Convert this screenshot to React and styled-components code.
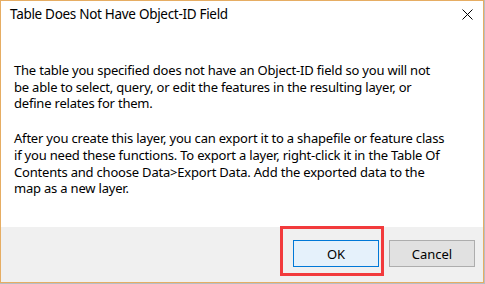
import React from 'react';
import styled, { createGlobalStyle } from 'styled-components';

const Global = createGlobalStyle`
  html, body {
    margin: 0;
    padding: 0;
    background: #b8bec4;
  }
  body {
    width: 485px;
    height: 284px;
    overflow: hidden;
    font-family: "Noto Sans", "Open Sans", sans-serif;
  }
`;

const Window = styled.div`
  box-sizing: border-box;
  width: 484px;
  height: 283px;
  border: 1px solid #e6ad63;
  background: #fff;
  display: flex;
  flex-direction: column;
`;

const TitleBar = styled.div`
  height: 26px;
  display: flex;
  align-items: center;
  justify-content: space-between;
  padding: 0 9px 0 9px;
  font-size: 13.5px;
  letter-spacing: -0.3px;
  color: #000;
`;

const CloseButton = styled.span`
  display: flex;
  width: 11px;
  height: 11px;
  margin-right: 1px;
`;

const Content = styled.div`
  flex: 1;
  padding: 35px 10px 0 13px;
  font-size: 13px;
  letter-spacing: -0.2px;
  line-height: 16.7px;
  color: #000;
`;

const Paragraph = styled.p`
  margin: 0 0 ${p => p.$gap || 0}px;
  white-space: nowrap;
`;

const Footer = styled.div`
  height: 55px;
  background: #f0f0f0;
  display: flex;
  justify-content: flex-end;
  align-items: flex-start;
  gap: 10px;
  padding: 13px 8px 0 0;
  box-sizing: border-box;
`;

const Highlight = styled.span`
  position: relative;
  display: inline-flex;

  &::after {
    content: '';
    position: absolute;
    top: -14px;
    left: -13px;
    right: -5px;
    bottom: -9px;
    border: 3px solid #f23a3c;
    pointer-events: none;
  }
`;

const Button = styled.button`
  box-sizing: border-box;
  width: 86px;
  height: 27px;
  padding: 0;
  font-family: inherit;
  font-size: 13px;
  color: #000;
  border: 1px solid ${p => (p.$primary ? '#0078d7' : '#adadad')};
  background: ${p => (p.$primary ? '#e5f1fb' : '#e1e1e1')};
`;

const App = () => (
  <>
    <Global />
    <Window>
      <TitleBar>
        <span>Table Does Not Have Object-ID Field</span>
        <CloseButton>
          <svg width="11" height="11" viewBox="0 0 11 11">
            <path d="M0.5 0.5 L10.5 10.5 M10.5 0.5 L0.5 10.5" stroke="#000" strokeWidth="1" fill="none" />
          </svg>
        </CloseButton>
      </TitleBar>
      <Content>
        <Paragraph $gap={18}>
          The table you specified does not have an Object-ID field so you will not
          <br />
          be able to select, query, or edit the features in the resulting layer, or
          <br />
          define relates for them.
        </Paragraph>
        <Paragraph>
          After you create this layer, you can export it to a shapefile or feature class
          <br />
          if you need these functions. To export a layer, right-click it in the Table Of
          <br />
          Contents and choose Data&gt;Export Data. Add the exported data to the
          <br />
          map as a new layer.
        </Paragraph>
      </Content>
      <Footer>
        <Highlight>
          <Button $primary>OK</Button>
        </Highlight>
        <Button>Cancel</Button>
      </Footer>
    </Window>
  </>
);

export default App;
